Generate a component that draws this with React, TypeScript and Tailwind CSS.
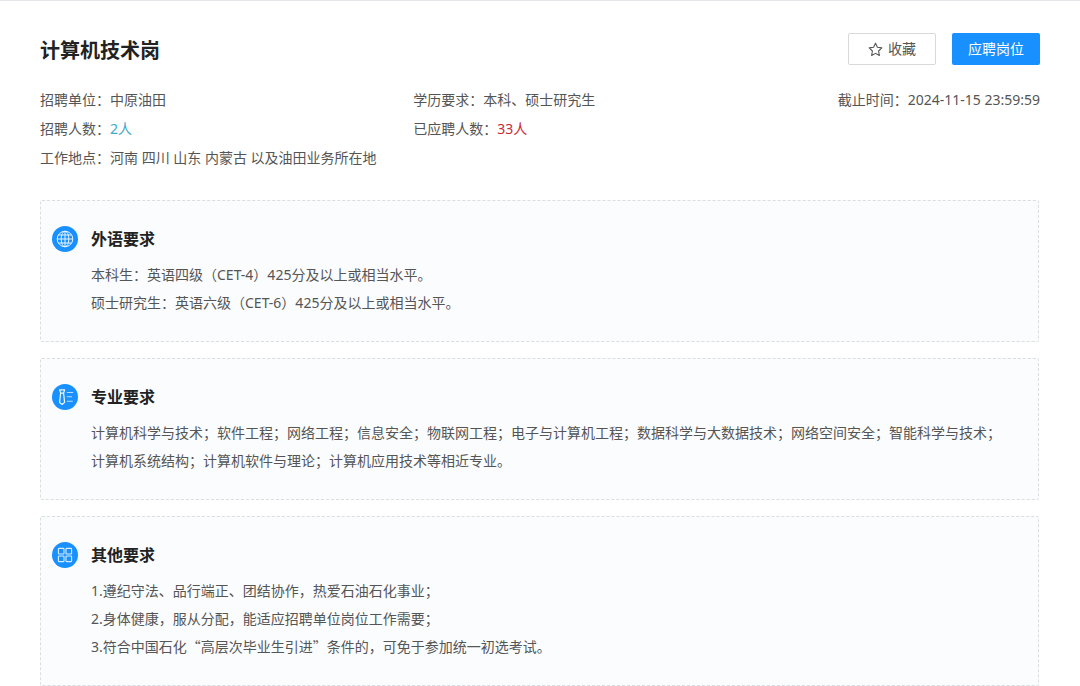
import type { ReactNode } from "react";

const badgeProps = {
  viewBox: "0 0 26 26",
  className: "size-[26px] shrink-0",
  fill: "none",
  "aria-hidden": true,
} as const;

function GlobeIcon() {
  return (
    <svg {...badgeProps}>
      <circle cx="13" cy="13" r="13" fill="#1890ff" />
      <g stroke="#e3f3ff" strokeWidth="1">
        <circle cx="13" cy="13" r="7.8" />
        <ellipse cx="13" cy="13" rx="3.8" ry="7.8" />
        <path d="M13 5.2v15.6M5.2 13h15.6M6.4 9h13.2M6.4 17h13.2" />
      </g>
    </svg>
  );
}

function TieIcon() {
  return (
    <svg {...badgeProps}>
      <circle cx="13" cy="13" r="13" fill="#1890ff" />
      <path
        d="M7.6 5.9h5l-1 3.3H8.6zM8.6 9.2 7.6 18.4l2.5 2.1 2.5-2.1-1-9.2"
        stroke="#f0f9ff"
        strokeWidth="1.2"
        strokeLinejoin="round"
      />
      <path d="M14.8 8.5h6.4M14.8 12.8h5.2M14.8 17.2h6" stroke="#b5dcff" strokeWidth="1.1" />
    </svg>
  );
}

function GridIcon() {
  return (
    <svg {...badgeProps}>
      <circle cx="13" cy="13" r="13" fill="#1890ff" />
      <g stroke="#d6edff" strokeWidth="1.1">
        <rect x="6.4" y="6.4" width="5.6" height="5.6" rx="0.6" />
        <rect x="14" y="6.4" width="5.6" height="5.6" rx="0.6" />
        <rect x="6.4" y="14" width="5.6" height="5.6" rx="0.6" />
        <rect x="14" y="14" width="5.6" height="5.6" rx="0.6" />
      </g>
    </svg>
  );
}

function StarIcon() {
  return (
    <svg viewBox="0 0 14 14" className="size-[15px]" fill="none" aria-hidden="true">
      <path
        d="M7 1.1l1.8 3.8 4.1.6-3 2.9.7 4.2L7 10.6l-3.6 2 .7-4.2-3-2.9 4.1-.6z"
        stroke="currentColor"
        strokeLinejoin="round"
      />
    </svg>
  );
}

function Field({ label, children }: { label: string; children: ReactNode }) {
  return (
    <div className="flex">
      <dt className="shrink-0">{label}：</dt>
      <dd>{children}</dd>
    </div>
  );
}

/* Full-width Chinese quotation marks around a phrase. */
function Quoted({ children }: { children: ReactNode }) {
  return <span className="font-['Noto_Sans_CJK_SC',sans-serif] leading-none">“{children}”</span>;
}

function Requirement({ icon, title, lines }: { icon: ReactNode; title: string; lines: ReactNode[] }) {
  return (
    <section className="flex gap-[13px] rounded-xs border border-dashed border-[#d9dfe1] bg-[#fafcfe] py-6 pr-7 pl-[11px]">
      <div className="flex h-7 items-center">{icon}</div>
      <div className="min-w-0 flex-1">
        <h2 className="mb-2 text-base leading-7 font-bold text-[#222]">{title}</h2>
        {lines.map((line, index) => (
          <p key={index} className="leading-7">
            {line}
          </p>
        ))}
      </div>
    </section>
  );
}

export default function App() {
  return (
    <main className="border-t border-[#e4e6e9] bg-white px-10 pt-8 font-['Noto_Sans','Noto_Sans_CJK_SC',sans-serif] text-sm text-[#555]">
      <header className="flex items-center justify-between">
        <h1 className="pt-1 text-xl leading-7 font-bold text-[#222]">计算机技术岗</h1>
        <div className="flex gap-4">
          <button
            type="button"
            className="flex h-8 w-[88px] items-center justify-center gap-[5px] rounded-xs border border-[#d9d9d9] bg-white"
          >
            <StarIcon />
            收藏
          </button>
          <button type="button" className="h-8 w-[88px] rounded-xs bg-[#1890ff] text-white">
            应聘岗位
          </button>
        </div>
      </header>

      <dl className="mt-5 grid grid-cols-[28fr_28fr_19fr] leading-[29px]">
        <Field label="招聘单位">中原油田</Field>
        <Field label="学历要求">本科、硕士研究生</Field>
        <div className="flex justify-end whitespace-nowrap">
          <Field label="截止时间">2024-11-15 23:59:59</Field>
        </div>
        <Field label="招聘人数">
          <span className="text-[#3fa9c4]">2人</span>
        </Field>
        <div className="col-span-2">
          <Field label="已应聘人数">
            <span className="text-[#cb2a35]">33人</span>
          </Field>
        </div>
        <div className="col-span-3">
          <Field label="工作地点">河南 四川 山东 内蒙古 以及油田业务所在地</Field>
        </div>
      </dl>

      <div className="mt-7 mr-px flex flex-col gap-4">
        <Requirement
          icon={<GlobeIcon />}
          title="外语要求"
          lines={[
            "本科生：英语四级（CET-4）425分及以上或相当水平。",
            "硕士研究生：英语六级（CET-6）425分及以上或相当水平。",
          ]}
        />
        <Requirement
          icon={<TieIcon />}
          title="专业要求"
          lines={[
            "计算机科学与技术；软件工程；网络工程；信息安全；物联网工程；电子与计算机工程；数据科学与大数据技术；网络空间安全；智能科学与技术；计算机系统结构；计算机软件与理论；计算机应用技术等相近专业。",
          ]}
        />
        <Requirement
          icon={<GridIcon />}
          title="其他要求"
          lines={[
            "1.遵纪守法、品行端正、团结协作，热爱石油石化事业；",
            "2.身体健康，服从分配，能适应招聘单位岗位工作需要；",
            <>
              3.符合中国石化<Quoted>高层次毕业生引进</Quoted>条件的，可免于参加统一初选考试。
            </>,
          ]}
        />
      </div>
    </main>
  );
}
